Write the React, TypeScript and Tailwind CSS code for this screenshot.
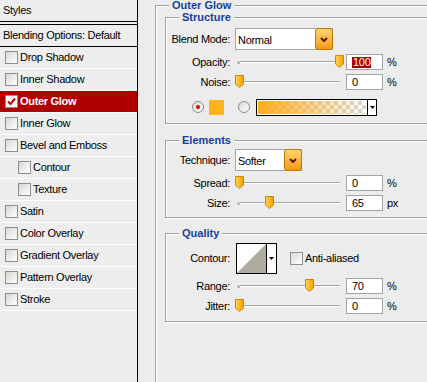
import React from 'react';

const effects = [
  { name: 'Drop Shadow' },
  { name: 'Inner Shadow' },
  { name: 'Outer Glow', active: true },
  { name: 'Inner Glow' },
  { name: 'Bevel and Emboss' },
  { name: 'Contour', indent: true },
  { name: 'Texture', indent: true },
  { name: 'Satin' },
  { name: 'Color Overlay' },
  { name: 'Gradient Overlay' },
  { name: 'Pattern Overlay' },
  { name: 'Stroke' },
];

const Checkbox = ({ checked }: { checked?: boolean }) => (
  <span
    className={`flex h-[13px] w-[13px] shrink-0 items-center justify-center border border-[#8e8e8e] ${
      checked ? 'bg-white' : 'bg-gradient-to-br from-[#d8d8d2] to-white'
    }`}
  >
    {checked && (
      <svg width="9" height="9" viewBox="0 0 9 9">
        <path d="M1 4.5 3.5 7 8 1.5" fill="none" stroke="#c80000" strokeWidth="2" />
      </svg>
    )}
  </span>
);

const Radio = ({ on }: { on?: boolean }) => (
  <span className="flex h-[12px] w-[12px] shrink-0 items-center justify-center rounded-full border border-[#8d8d8d] bg-gradient-to-br from-[#d8d8d2] to-white">
    {on && <span className="h-[4px] w-[4px] rounded-full bg-[#d40000]" />}
  </span>
);

const Thumb = () => (
  <svg width="9" height="13" viewBox="0 0 9 13">
    <defs>
      <linearGradient id="thumbFill" x1="0" x2="1" y1="0" y2="0">
        <stop offset="0" stopColor="#ffd34d" />
        <stop offset="1" stopColor="#f5a000" />
      </linearGradient>
    </defs>
    <path d="M0.5 0.5h8v8.5l-4 3.5-4-3.5z" fill="url(#thumbFill)" stroke="#d08800" />
  </svg>
);

// thumb offset in px along the track
const Slider = ({ at }: { at: number }) => (
  <div className="relative flex h-[13px] w-[108px] items-center">
    <span className="ml-[2px] h-[3px] w-[3px] rounded-full bg-[#b0b0b0]" />
    <span className="h-[2px] w-[100px] border-t border-b border-t-[#a4a4a4] border-b-white" />
    <span className="absolute top-[-1px]" style={{ left: at }}>
      <Thumb />
    </span>
  </div>
);

const NumBox = ({ children }: { children: React.ReactNode }) => (
  <div className="flex h-[16px] w-[37px] items-center border border-[#a3a3a3] bg-white pl-[5px] leading-none">
    {children}
  </div>
);

const Chevron = () => (
  <svg width="8" height="5" viewBox="0 0 8 5">
    <path d="M1 1l3 3 3-3" fill="none" stroke="#5a1800" strokeWidth="2" />
  </svg>
);

const Arrow = () => (
  <svg width="5" height="3" viewBox="0 0 5 3">
    <path d="M0 0h5L2.5 3z" fill="#000" />
  </svg>
);

const Dropdown = ({ value, width }: { value: string; width: string }) => (
  <div className={`flex h-[22px] items-center border border-[#a5a5a5] bg-white ${width}`}>
    <span className="flex-1 pl-[2px] pt-[2px]">{value}</span>
    <span className="-mr-px flex h-[22px] w-[18px] items-center justify-center rounded-[3px] border border-[#c27800] bg-gradient-to-b from-[#ffd66e] to-[#f39a00]">
      <Chevron />
    </span>
  </div>
);

const SliderRow = ({
  label,
  at,
  value,
  unit,
}: {
  label: string;
  at: number;
  value: React.ReactNode;
  unit: string;
}) => (
  <div className="flex h-[20px] items-center">
    <span className="w-[64px] text-right">{label}</span>
    <div className="ml-[5px]">
      <Slider at={at} />
    </div>
    <div className="ml-[3px]">
      <NumBox>{value}</NumBox>
    </div>
    <span className="ml-[4px]">{unit}</span>
  </div>
);

const Legend = ({ children, indent, lead }: { children: string; indent: string; lead: string }) => (
  <legend className={`${indent} ${lead} bg-[#ececec] px-[3px] text-[11px] font-bold tracking-normal text-[#173fa3]`}>
    {children}
  </legend>
);

const groupBox =
  'border border-[#a0a0a0] shadow-[inset_1px_1px_0_#fff,1px_1px_0_#fff]';

export default function App() {
  return (
    <div className="flex h-[382px] w-[427px] overflow-hidden bg-[#ececec] font-['Liberation_Sans',sans-serif] text-[11px] tracking-[-0.3px] text-black">
      <aside className="h-full w-[138px] shrink-0 border-r border-black bg-[#eeeeee]">
        <div className="flex h-[22px] items-center border-b border-black pl-[3px]">Styles</div>
        <div className="mt-[2px] flex h-[23px] items-center border-t border-b border-black pl-[3px]">
          Blending Options: Default
        </div>
        {effects.map((e) => (
          <div
            key={e.name}
            className={`flex h-[22px] items-center gap-[2px] border-b border-white ${
              e.indent ? 'pl-[18px]' : 'pl-[5px]'
            } ${e.active ? 'bg-[#b10000] font-bold text-white' : ''}`}
          >
            <Checkbox checked={e.active} />
            <span>{e.name}</span>
          </div>
        ))}
      </aside>

      <fieldset className={`ml-[17px] h-[400px] w-[290px] shrink-0 pl-[9px] ${groupBox}`}>
        <Legend indent="ml-[4px]" lead="leading-[11px]">Outer Glow</Legend>

        <fieldset className={`w-[280px] pb-[7px] ${groupBox}`}>
          <Legend indent="ml-[13px]" lead="leading-[13px]">Structure</Legend>
          <div className="mt-[4px] flex h-[22px] items-center">
            <span className="w-[64px] text-right">Blend Mode:</span>
            <div className="ml-[5px]">
              <Dropdown value="Normal" width="w-[98px]" />
            </div>
          </div>
          <div className="mt-[2px]">
            <SliderRow
              label="Opacity:"
              at={100}
              unit="%"
              value={<span className="bg-[#a80000] px-px text-white">100</span>}
            />
            <SliderRow label="Noise:" at={0} unit="%" value="0" />
          </div>
          <div className="mt-[6px] flex h-[18px] items-center">
            <span className="ml-[26px]">
              <Radio on />
            </span>
            <span className="ml-[5px] h-[15px] w-[15px] bg-[#fdb414]" />
            <span className="ml-[14px]">
              <Radio />
            </span>
            <div className="ml-[6px] flex h-[17px] w-[121px] border border-black">
              <div className="flex-1 border border-white bg-[conic-gradient(#d6d6d6_25%,#fff_0_50%,#d6d6d6_0_75%,#fff_0)] bg-[length:8px_8px]">
                <div className="h-full w-full bg-gradient-to-r from-[#fdab1e] to-[#fdab1e00]" />
              </div>
              <div className="flex w-[9px] items-center justify-center border-l border-black bg-white">
                <Arrow />
              </div>
            </div>
          </div>
        </fieldset>

        <fieldset className={`mt-[10px] w-[280px] pb-[4px] ${groupBox}`}>
          <Legend indent="ml-[13px]" lead="leading-[13px]">Elements</Legend>
          <div className="mt-[2px] flex h-[22px] items-center">
            <span className="w-[64px] text-right">Technique:</span>
            <div className="ml-[5px]">
              <Dropdown value="Softer" width="w-[67px]" />
            </div>
          </div>
          <div className="mt-[2px]">
            <SliderRow label="Spread:" at={0} unit="%" value="0" />
            <SliderRow label="Size:" at={30} unit="px" value="65" />
          </div>
        </fieldset>

        <fieldset className={`mt-[9px] w-[280px] pb-[5px] ${groupBox}`}>
          <Legend indent="ml-[13px]" lead="leading-[13px]">Quality</Legend>
          <div className="mt-[3px] flex h-[31px] items-center">
            <span className="w-[64px] text-right">Contour:</span>
            <div className="ml-[6px] flex h-[31px] w-[41px] border border-black bg-white">
              <svg width="29" height="29" viewBox="0 0 29 29" className="shrink-0">
                <path d="M0 29 29 0v29z" fill="#aeab9f" />
              </svg>
              <div className="flex flex-1 items-center justify-center border-l border-black">
                <Arrow />
              </div>
            </div>
            <span className="ml-[13px]">
              <Checkbox />
            </span>
            <span className="ml-[2px]">Anti-aliased</span>
          </div>
          <div className="mt-[2px]">
            <SliderRow label="Range:" at={70} unit="%" value="70" />
            <SliderRow label="Jitter:" at={0} unit="%" value="0" />
          </div>
        </fieldset>
      </fieldset>
    </div>
  );
}
